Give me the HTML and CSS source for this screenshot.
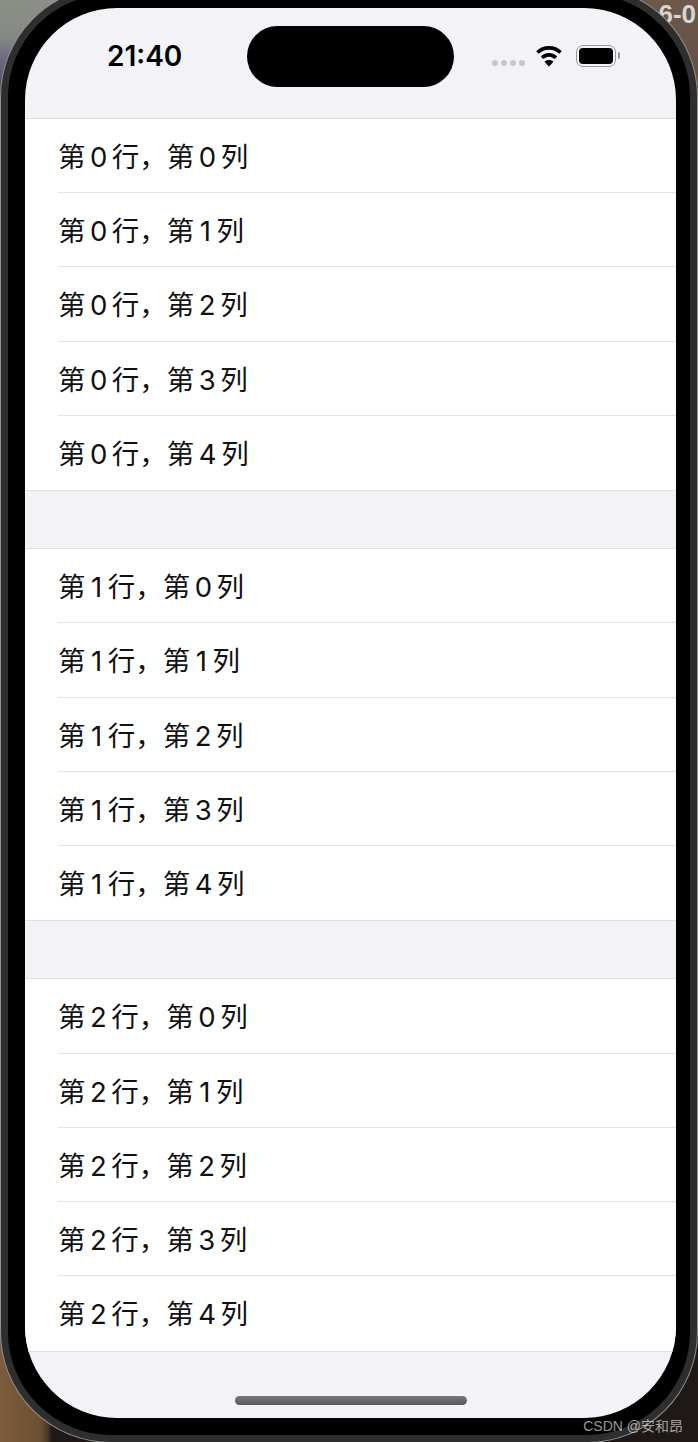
FILE: index.html
```html
<!DOCTYPE html>
<html lang="en">
  <head>
    <meta charset="UTF-8" />
    <meta name="viewport" content="width=device-width, initial-scale=1.0" />
    <title>Table View</title>
    <link rel="stylesheet" href="styles.css">
  </head>
  <body>
    <span class="desktop-text">6-0</span>
    <div class="phone">
      <div class="screen">
        <div class="status-bar">
          <span class="time">21:40</span>
          <div class="status-icons">
            <div class="dots"><i></i><i></i><i></i><i></i></div>
            <svg class="wifi" width="28" height="22" viewBox="0 0 28 22">
              <path d="M14 0C8.6 0 4 2 .6 5.400l2.600 2.800C6 5.400 9.800 3.800 14 3.800s8 1.600 10.800 4.400l2.600-2.800C24 2 19.400 0 14 0z" />
              <path d="M14 7.400c-3.400 0-6.400 1.300-8.600 3.500l2.600 2.800c1.600-1.500 3.700-2.500 6-2.500s4.400 1 6 2.500l2.600-2.800C20.400 8.700 17.400 7.400 14 7.400z" />
              <path d="M14 14.600c-1.900 0-3.500.7-4.700 1.900L14 21.600l4.700-5.100c-1.200-1.200-2.800-1.900-4.700-1.900z" />
            </svg>
            <div class="battery"><div class="battery-fill"></div></div>
          </div>
        </div>
        <div class="dynamic-island"></div>

        <div class="section">
          <div class="row">第<span class="num">0</span>行，第<span class="num">0</span>列</div>
          <div class="row">第<span class="num">0</span>行，第<span class="num one">1</span>列</div>
          <div class="row">第<span class="num">0</span>行，第<span class="num">2</span>列</div>
          <div class="row">第<span class="num">0</span>行，第<span class="num">3</span>列</div>
          <div class="row">第<span class="num">0</span>行，第<span class="num">4</span>列</div>
        </div>
        <div class="section">
          <div class="row">第<span class="num one">1</span>行，第<span class="num">0</span>列</div>
          <div class="row">第<span class="num one">1</span>行，第<span class="num one">1</span>列</div>
          <div class="row">第<span class="num one">1</span>行，第<span class="num">2</span>列</div>
          <div class="row">第<span class="num one">1</span>行，第<span class="num">3</span>列</div>
          <div class="row">第<span class="num one">1</span>行，第<span class="num">4</span>列</div>
        </div>
        <div class="section">
          <div class="row">第<span class="num">2</span>行，第<span class="num">0</span>列</div>
          <div class="row">第<span class="num">2</span>行，第<span class="num one">1</span>列</div>
          <div class="row">第<span class="num">2</span>行，第<span class="num">2</span>列</div>
          <div class="row">第<span class="num">2</span>行，第<span class="num">3</span>列</div>
          <div class="row">第<span class="num">2</span>行，第<span class="num">4</span>列</div>
        </div>

        <div class="home-indicator"></div>
      </div>
    </div>
    <span class="watermark">CSDN @安和昂</span>
  </body>
</html>
```

FILE: styles.css
```css
html,
body {
  margin: 0;
  height: 1442px;
  overflow: hidden;
}

/* blurred desktop behind the simulator, one patch per corner */
body {
  position: relative;
  background:
    linear-gradient(180deg, #8b8f87 0, #868a84 35px, #6b6a7c 60px, #3a3a40 110px) 0 0 / 70px 120px no-repeat,
    linear-gradient(180deg, #6d584c 0, #5f4a40 120px) 100% 0 / 70px 120px no-repeat,
    linear-gradient(90deg, #7c5c3c 0, #6c5034 40px, #4a3626 48px, #1e1817 52px) 0 100% / 100% 130px no-repeat,
    linear-gradient(90deg, #1e1817 0, #2a1a1a 70%, #3f201e 85%) 100% 100% / 50% 130px no-repeat,
    #2a2a2a;
  font-family: Inter, "Noto Sans CJK SC", sans-serif;
}

.desktop-text {
  position: absolute;
  top: -1px;
  right: 2px;
  font-family: "Liberation Sans", sans-serif;
  font-size: 26px;
  font-weight: 700;
  color: #d8d6d4;
}

.phone {
  position: relative;
  box-sizing: border-box;
  width: 696px;
  height: 1455px;
  margin: -13px 0 0 1px;
  padding: 14px 14px 17px 17px;
  background: #000;
  border: 7px solid #2e2e2e;
  border-radius: 110px;
  box-shadow: 0 0 0 1px #8f8f8f;
}

.screen {
  position: relative;
  height: 1410px;
  overflow: hidden;
  background: #f2f2f7;
  border-radius: 92px;
}

.status-bar {
  display: flex;
  justify-content: space-between;
  box-sizing: border-box;
  height: 110px;
  padding: 33px 60px 0 82px;
}

.time {
  font-size: 28px;
  font-weight: 600;
  line-height: 30px;
  color: #000;
}

.status-icons {
  display: flex;
  align-items: flex-start;
}

.dots {
  display: flex;
  gap: 3px;
  margin: 19px 10px 0 0;
}

.dots i {
  width: 6px;
  height: 6px;
  background: #c6c6ca;
  border-radius: 50%;
}

.wifi {
  margin: 5px 13px 0 0;
  width: 28px;
  height: 21px;
}

.battery {
  position: relative;
  box-sizing: border-box;
  width: 40px;
  height: 22px;
  margin-top: 4px;
  padding: 2px;
  border: 1.5px solid #96969a;
  border-radius: 7px;
}

/* battery cap */
.battery::after {
  content: "";
  position: absolute;
  top: 5.500px;
  right: -5px;
  width: 2px;
  height: 7px;
  background: #96969a;
  border-radius: 0 2px 2px 0;
}

.battery-fill {
  height: 100%;
  background: #000;
  border-radius: 4px;
}

.dynamic-island {
  position: absolute;
  top: 18px;
  left: 222px;
  width: 207px;
  height: 61px;
  background: #000;
  border-radius: 31px;
}

.section {
  margin-bottom: 57px;
  background: #fff;
  border-top: 1px solid #dfdfe3;
  border-bottom: 1px solid #dfdfe3;
}

.row {
  box-sizing: border-box;
  height: 74.24px;
  margin-left: 33px;
  font-size: 27.5px;
  line-height: 76px;
  color: #111;
  border-bottom: 1px solid #e2e2e5;
}

.row:last-child {
  border-bottom: 0;
}

.num {
  margin: 0 4.5px;
}

.num.one {
  margin: 0 5.5px;
}

.home-indicator {
  position: absolute;
  left: 210px;
  bottom: 13px;
  width: 232px;
  height: 9px;
  background: linear-gradient(180deg, #78787c, #58585c);
  border-radius: 5px;
}

.watermark {
  position: absolute;
  top: 1415px;
  right: 15px;
  font-family: "Liberation Sans", "Noto Sans CJK SC", sans-serif;
  font-size: 14px;
  color: rgba(255, 255, 255, 0.6);
}
```
